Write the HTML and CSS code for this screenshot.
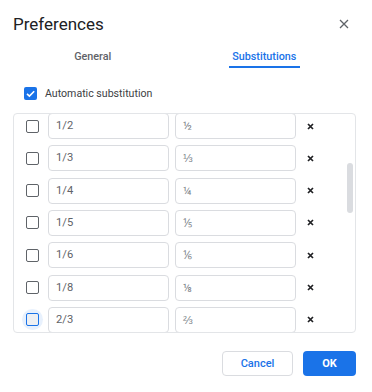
FILE: index.html
```html
<!DOCTYPE html>
<html>
<head>
<meta charset="utf-8">
<link rel="stylesheet" href="styles.css">
</head>
<body>
<div class="dialog">
  <div class="header">
    <div class="title">Preferences</div>
    <svg class="close" width="10" height="10" viewBox="0 0 10 10"><path d="M1 1L9 9M9 1L1 9" stroke="#5f6368" stroke-width="1.3" fill="none"/></svg>
  </div>
  <div class="tabs">
    <div class="tab"><span class="tab-label">General</span></div>
    <div class="tab active"><span class="tab-label">Substitutions</span></div>
  </div>
  <div class="auto">
    <span class="cb checked"><svg width="13" height="13" viewBox="0 0 13 13"><path d="M3 6.8L5.4 9.1L10.2 4.2" stroke="#fff" stroke-width="1.6" fill="none"/></svg></span>
    <span class="auto-label">Automatic substitution</span>
  </div>
  <div class="list">
    <div class="row"><span class="cb"></span><div class="field">1/2</div><div class="field frac">½</div><span class="del"><svg width="7" height="7" viewBox="0 0 7 7"><path d="M1 1L6 6M6 1L1 6" stroke="#202124" stroke-width="1.7"/></svg></span></div>
    <div class="row"><span class="cb"></span><div class="field">1/3</div><div class="field frac">⅓</div><span class="del"><svg width="7" height="7" viewBox="0 0 7 7"><path d="M1 1L6 6M6 1L1 6" stroke="#202124" stroke-width="1.7"/></svg></span></div>
    <div class="row"><span class="cb"></span><div class="field">1/4</div><div class="field frac">¼</div><span class="del"><svg width="7" height="7" viewBox="0 0 7 7"><path d="M1 1L6 6M6 1L1 6" stroke="#202124" stroke-width="1.7"/></svg></span></div>
    <div class="row"><span class="cb"></span><div class="field">1/5</div><div class="field frac">⅕</div><span class="del"><svg width="7" height="7" viewBox="0 0 7 7"><path d="M1 1L6 6M6 1L1 6" stroke="#202124" stroke-width="1.7"/></svg></span></div>
    <div class="row"><span class="cb"></span><div class="field">1/6</div><div class="field frac">⅙</div><span class="del"><svg width="7" height="7" viewBox="0 0 7 7"><path d="M1 1L6 6M6 1L1 6" stroke="#202124" stroke-width="1.7"/></svg></span></div>
    <div class="row"><span class="cb"></span><div class="field">1/8</div><div class="field frac">⅛</div><span class="del"><svg width="7" height="7" viewBox="0 0 7 7"><path d="M1 1L6 6M6 1L1 6" stroke="#202124" stroke-width="1.7"/></svg></span></div>
    <div class="row"><span class="cb focused"></span><div class="field">2/3</div><div class="field frac">⅔</div><span class="del"><svg width="7" height="7" viewBox="0 0 7 7"><path d="M1 1L6 6M6 1L1 6" stroke="#202124" stroke-width="1.7"/></svg></span></div>
    <div class="thumb"></div>
  </div>
  <div class="footer">
    <button class="btn cancel">Cancel</button>
    <button class="btn ok">OK</button>
  </div>
</div>
</body>
</html>
```
FILE: styles.css
```css
* { box-sizing: border-box; }
html, body { margin: 0; padding: 0; background: #fff; }
.dialog {
  width: 372px;
  height: 392px;
  font-family: Roboto, "Liberation Sans", sans-serif;
  color: #3c4043;
  display: flex;
  flex-direction: column;
}
.header {
  display: flex;
  justify-content: space-between;
  align-items: center;
  height: 24px;
  margin-top: 12px;
  padding: 0 23px 0 13px;
}
.title {
  font-size: 17px;
  color: #202124;
  line-height: 24px;
}
.close { display: block; }
.tabs {
  display: grid;
  grid-template-columns: 1fr 1fr;
  margin: 8px 0 0 7px;
  width: 343px;
  height: 24px;
}
.tab { display: flex; justify-content: center; }
.tab-label {
  display: inline-block;
  font-size: 10.8px;
  font-weight: 500;
  color: #5f6368;
  padding: 3px 3.5px 0;
  line-height: 19px;
  height: 24px;
}
.tab.active .tab-label {
  color: #1a73e8;
  border-bottom: 2px solid #1a73e8;
}
.auto {
  display: flex;
  align-items: center;
  gap: 8px;
  margin-top: 19px;
  padding-left: 24px;
  height: 13px;
}
.auto-label { font-size: 10.6px; color: #3c4043; }
.cb {
  position: relative;
  flex: none;
  width: 13px;
  height: 13px;
  border: 1.6px solid #5f6368;
  border-radius: 2px;
  display: block;
}
.cb.checked {
  border: none;
  background: #1a73e8;
}
.cb.checked svg { display: block; }
.cb.focused {
  border-color: #1a73e8;
  background: #eef0f3;
}
.cb.focused::before {
  content: "";
  position: absolute;
  left: -5.5px;
  top: -5.5px;
  width: 21px;
  height: 21px;
  border-radius: 50%;
  background: rgba(26, 115, 232, 0.1);
  z-index: -1;
}
.list {
  position: relative;
  margin: 13px 0 0 13px;
  width: 343px;
  height: 220px;
  border: 1px solid #e3e5e8;
  border-radius: 4px;
  overflow: hidden;
  isolation: isolate;
}
.row {
  display: flex;
  align-items: center;
  height: 26px;
  margin-bottom: 6.33px;
  padding-left: 12px;
}
.row:first-child { margin-top: -1px; }
.field {
  width: 121px;
  height: 26px;
  border: 1px solid #dadce0;
  border-radius: 4px;
  font-size: 11.2px;
  line-height: 24px;
  padding-left: 7px;
  color: #5f6368;
  margin-left: 9px;
}
.field.frac { margin-left: 6px; color: #80868b; font-size: 11.5px; }
.del {
  display: flex;
  width: 14px;
  justify-content: center;
  margin-left: 7px;
}
.del svg { display: block; }
.thumb {
  position: absolute;
  left: 333px;
  top: 49px;
  width: 6px;
  height: 50px;
  border-radius: 3px;
  background: #dadce0;
}
.footer {
  display: flex;
  justify-content: flex-end;
  gap: 10px;
  margin-top: 18px;
  padding-right: 16px;
}
.btn {
  height: 25px;
  border-radius: 4px;
  font-family: Roboto, "Liberation Sans", sans-serif;
  font-size: 11px;
  font-weight: 500;
  padding: 0;
  cursor: pointer;
}
.cancel {
  width: 71px;
  background: #fff;
  color: #1a73e8;
  border: 1px solid #dadce0;
}
.ok {
  width: 53px;
  background: #1a73e8;
  color: #fff;
  border: none;
  font-weight: 700;
}
```
